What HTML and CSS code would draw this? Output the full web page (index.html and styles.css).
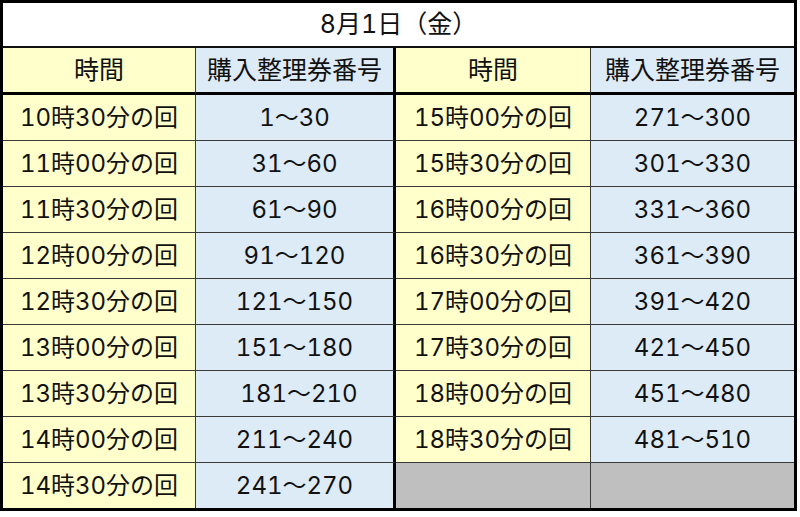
FILE: index.html
```html
<!DOCTYPE html>
<html lang="ja">
<head>
<meta charset="utf-8">
<link rel="stylesheet" href="styles.css">
</head>
<body>
<div class="sheet">
  <div class="cell title">8月1日（金）</div>

  <div class="cell time head">時間</div>
  <div class="cell num head">購入整理券番号</div>
  <div class="cell time head">時間</div>
  <div class="cell num head last">購入整理券番号</div>

  <div class="cell time">10時30分の回</div><div class="cell num">1～30</div><div class="cell time">15時00分の回</div><div class="cell num last">271～300</div>
  <div class="cell time">11時00分の回</div><div class="cell num">31～60</div><div class="cell time">15時30分の回</div><div class="cell num last">301～330</div>
  <div class="cell time">11時30分の回</div><div class="cell num">61～90</div><div class="cell time">16時00分の回</div><div class="cell num last">331～360</div>
  <div class="cell time">12時00分の回</div><div class="cell num">91～120</div><div class="cell time">16時30分の回</div><div class="cell num last">361～390</div>
  <div class="cell time">12時30分の回</div><div class="cell num">121～150</div><div class="cell time">17時00分の回</div><div class="cell num last">391～420</div>
  <div class="cell time">13時00分の回</div><div class="cell num">151～180</div><div class="cell time">17時30分の回</div><div class="cell num last">421～450</div>
  <div class="cell time">13時30分の回</div><div class="cell num shift">181～210</div><div class="cell time">18時00分の回</div><div class="cell num last">451～480</div>
  <div class="cell time">14時00分の回</div><div class="cell num">211～240</div><div class="cell time">18時30分の回</div><div class="cell num last">481～510</div>
  <div class="cell time bottom">14時30分の回</div><div class="cell num bottom">241～270</div><div class="cell empty bottom"></div><div class="cell empty bottom last"></div>
</div>
</body>
</html>
```

FILE: styles.css
```css
html, body {
  margin: 0;
  padding: 0;
  background: #ffffff;
}

.sheet {
  box-sizing: border-box;
  width: 797px;
  height: 511px;
  border: 3px solid #000000;
  display: grid;
  grid-template-columns: 193px 200px 195px 203px;
  grid-template-rows: 45px 47px repeat(8, 46px) 45px;
  font-family: Inter, "Noto Sans CJK JP", "Noto Sans", sans-serif;
  font-variant-numeric: tabular-nums;
  font-size: 24px;
  color: #111111;
}

.cell {
  box-sizing: border-box;
  display: flex;
  align-items: center;
  justify-content: center;
  border-bottom: 1px solid #3a3a3a;
  border-right: 1px solid #3a3a3a;
  white-space: pre;
  line-height: 1;
}

.title {
  grid-column: 1 / 5;
  background: #ffffff;
  border-right: none;
  border-bottom: 2px solid #111111;
  font-size: 25px;
}

.head {
  border-bottom: 3px solid #000000;
  font-size: 25px;
}

.time {
  background: #ffffcc;
}

.num {
  background: #ddebf7;
}

.sheet > .cell:nth-child(4n+3) {
  border-right: 3px solid #000000;
}

.last {
  border-right: none;
}

.bottom {
  border-bottom: none;
}

.empty {
  background: #bfbfbf;
}

.shift {
  padding-left: 9px;
}
```
